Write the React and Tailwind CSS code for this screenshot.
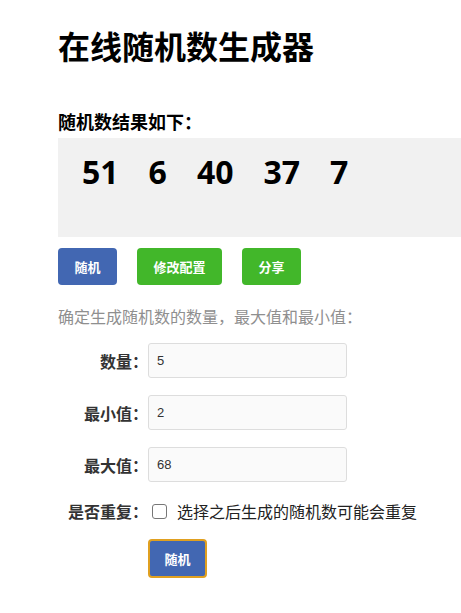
import { useState } from "react";

const numbers = [51, 6, 40, 37, 7];
const fields = [
  ["数量：", "5"],
  ["最小值：", "2"],
  ["最大值：", "68"]
];

export default function App() {
  const [repeat, setRepeat] = useState(false);

  return (
    <div className="min-h-[613px] bg-white pl-[58px] pt-[25px] font-['Noto_Sans_CJK_SC',sans-serif] text-[#222]">
      <h1 className="text-[32px] font-bold leading-[40px] text-black">在线随机数生成器</h1>

      <h2 className="mt-[44px] text-[18px] font-bold leading-[24px] text-black">随机数结果如下：</h2>
      <div className="mt-[5px] flex h-[99px] items-start gap-[30px] bg-[#f1f1f1] pl-[24px] pt-[13px]">
        {numbers.map((n, i) => (
          <span key={i} className="font-['Open_Sans','Noto_Sans_CJK_SC',sans-serif] text-[32px] font-bold leading-[42px] text-black">{n}</span>
        ))}
      </div>

      <div className="mt-[11px] flex gap-[20px]">
        <button className="h-[37px] w-[59px] rounded-[4px] bg-[#4267b2] text-[13px] font-bold text-white">随机</button>
        <button className="h-[37px] w-[85px] rounded-[4px] bg-[#42b72a] text-[13px] font-bold text-white">修改配置</button>
        <button className="h-[37px] w-[59px] rounded-[4px] bg-[#42b72a] text-[13px] font-bold text-white">分享</button>
      </div>

      <p className="mt-[19px] text-[16px] leading-[24px] text-[#8f8f8f]">确定生成随机数的数量，最大值和最小值：</p>

      <div className="mt-[15px] flex flex-col gap-[17px]">
        {fields.map(([label, value]) => (
          <div key={label} className="flex items-center">
            <label className="w-[90px] text-right text-[16px] font-bold leading-[24px] text-[#333]">{label}</label>
            <input
              defaultValue={value}
              className="h-[35px] w-[199px] rounded-[3px] border border-[#ddd] bg-[#fafafa] px-[8px] font-['Liberation_Sans',sans-serif] text-[13px] text-[#333] outline-none"
            />
          </div>
        ))}
      </div>

      <div className="mt-[17px] flex items-center">
        <span className="w-[90px] text-right text-[16px] font-bold leading-[24px] text-[#333]">是否重复：</span>
        <label className="flex items-center text-[16px] leading-[24px] text-[#222]">
          <input
            type="checkbox"
            checked={repeat}
            onChange={(e) => setRepeat(e.target.checked)}
            className="ml-[4px] mr-[10px] h-[15px] w-[15px] appearance-none rounded-[3px] border border-[#777] bg-white"
          />
          选择之后生成的随机数可能会重复
        </label>
      </div>

      <div className="mt-[16px] pl-[90px]">
        <button className="h-[39px] w-[59px] rounded-[4px] border-2 border-[#e0a020] bg-[#4267b2] text-[13px] font-bold text-white">随机</button>
      </div>
    </div>
  );
}
